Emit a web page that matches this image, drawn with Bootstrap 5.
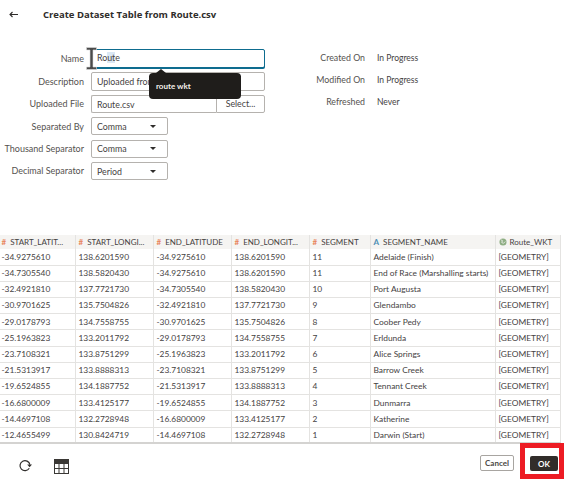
<!DOCTYPE html>
<html lang="en">
<head>
  <meta charset="UTF-8" />
  <meta name="viewport" content="width=device-width, initial-scale=1.0"/>
  <title>Create Dataset Table</title>
  <link href="https://cdn.jsdelivr.net/npm/bootstrap@5.3.3/dist/css/bootstrap.min.css" rel="stylesheet" />
  <style>
    html, body { height: 480px; overflow: hidden; }
    body { font-family: "Lato", "Liberation Sans", sans-serif; font-size: 8.5px; color: #45423f; background: #fff; }
    .page-head { height: 29px; padding-left: 9px; }
    .page-title { font-family: "Open Sans", sans-serif; font-size: 9.5px; font-weight: 700; margin: 0 0 0 25px; color: #2f2d2b; }
    .top-area { height: 206px; padding-top: 20px; }
    .form-side { width: 265px; position: relative; }
    .form-line { display: flex; align-items: center; height: 18px; margin-bottom: 4.4px; }
    .form-line.tall { height: 19px; margin-bottom: 4px; }
    .line-label { width: 84px; margin: 0; padding: 0; text-align: right; color: #55524f; flex: none; font-size: 9px; }
    .line-field { margin-left: 7px; flex: 1; }
    .form-control.ora-input { font-size: 8.8px; height: 100%; min-height: 0; padding: 0 5px; border-radius: 2px; border-color: #b5b2ae; color: #45423f; font-family: inherit; line-height: 1; }
    .tall .ora-input { height: 19px; }
    .ora-input.is-active { border-color: #0e6c8f; border-width: 1px; box-shadow: 0 1px 0 #0e6c8f; display: flex; align-items: center; }
    .sel-part { background: #dbe8f4; }
    .btn.ora-select-btn { width: 77px; height: 18px; font-size: 8.8px; padding: 0 5px; border: 1px solid #b5b2ae; border-radius: 2px; color: #45423f; display: flex; align-items: center; justify-content: space-between; background: #fff; }
    .ora-select-btn::after { border-top-width: 3px; border-left-width: 3px; border-right-width: 3px; margin-right: 6px; color: #2f2d2b; }
    .btn.ora-file-btn { width: 49px; height: 18px; padding: 0; font-size: 8.8px; border: 1px solid #b5b2ae; border-radius: 0 2px 2px 0; color: #45423f; background: #fff; }
    .file-box { height: 18px; }
    .file-box .ora-input { border-right: 0; border-radius: 2px 0 0 2px; }
    .tip-box { position: absolute; left: 149px; top: 24px; width: 92px; height: 26px; background: #1f1d1b; border-radius: 4px; color: #f4f1ec; font-weight: 700; font-size: 8px; padding: 7px 0 0 7px; }
    .tip-box::before { content: ""; position: absolute; left: 7px; top: -4px; border-left: 5px solid transparent; border-right: 5px solid transparent; border-bottom: 4px solid #1f1d1b; }
    .beam { position: absolute; left: 85px; top: -3px; }
    .info-side { margin-top: -2px; }
    .info-line { display: flex; height: 22px; align-items: center; }
    .info-label { width: 100px; text-align: right; color: #55524f; font-size: 8.8px; }
    .info-val { margin-left: 12px; }
    .grid-wrap { width: 560px; height: 208px; }
    .table.data-grid { table-layout: fixed; width: 560px; margin: 0; font-size: 8.4px; color: #45423f; --bs-table-bg: transparent; border-color: #e4e3e1; }
    .data-grid thead { vertical-align: middle; }
    .data-grid th { height: 14px; background: #f5f4f2; font-size: 8px; font-weight: 400; padding: 0 0 0 3px; border-bottom: 0; border-right: 1px solid #e4e3e1; white-space: nowrap; overflow: hidden; line-height: 1; color: #45423f; vertical-align: middle; }
    .data-grid td { height: 16.2px; padding: 0 0 0 3px; border-bottom: 1px solid #e4e3e1; border-right: 1px solid #e4e3e1; white-space: nowrap; line-height: 1; vertical-align: middle; }
    .data-grid th:first-child, .data-grid td:first-child { padding-left: 1.5px; }
    .data-grid tbody tr:last-child td { border-bottom-color: #d4d3d1; border-bottom-width: 2px; }
    .hash { color: #e8845c; margin-right: 4px; font-weight: 700; }
    .alpha { color: #4f8fb5; margin-right: 4px; font-weight: 700; }
    .geo-mark { vertical-align: -1px; margin-right: 3px; }
    .foot-bar { height: 36px; }
    .foot-icons { padding-left: 19px; padding-top: 16px; gap: 22px; }
    .btn.ora-cancel { width: 34px; height: 16px; padding: 0; font-size: 8px; font-weight: 700; color: #4a4744; background: #fff; border: 1px solid #a8a5a1; border-radius: 2px; line-height: 1; margin-right: 6px; margin-bottom: 8px; }
    .ok-frame { width: 44px; height: 36px; border: 5px solid #ed1c24; padding: 8px 0 0 5px; }
    .btn.ora-ok { width: 28px; height: 15px; padding: 0; font-size: 8px; font-weight: 700; color: #fff; background: #312d2a; border: 0; border-radius: 2px; line-height: 1; display: block; }
  </style>
</head>
<body>

  <!-- title bar -->
  <div class="page-head d-flex align-items-center">
    <svg width="9" height="7" viewBox="0 0 9 7"><path d="M9 3.5H1.5M3.5 1L1 3.5 3.5 6" fill="none" stroke="#2f2d2b" stroke-width="1.1"/></svg>
    <h1 class="page-title">Create Dataset Table from Route.csv</h1>
  </div>

  <!-- form and file info -->
  <div class="top-area d-flex">
    <div class="form-side">
      <div class="form-line tall">
        <label class="line-label">Name</label>
        <div class="line-field"><div class="form-control ora-input is-active"><span>Ro<span class="sel-part">ut</span>e</span></div></div>
      </div>
      <div class="form-line tall">
        <label class="line-label">Description</label>
        <div class="line-field"><input class="form-control ora-input" value="Uploaded from Route.csv"></div>
      </div>
      <div class="form-line">
        <label class="line-label">Uploaded File</label>
        <div class="line-field d-flex file-box">
          <input class="form-control ora-input" value="Route.csv">
          <button class="btn ora-file-btn flex-shrink-0">Select...</button>
        </div>
      </div>
      <div class="form-line">
        <label class="line-label">Separated By</label>
        <div class="line-field"><button class="btn ora-select-btn dropdown-toggle">Comma</button></div>
      </div>
      <div class="form-line">
        <label class="line-label">Thousand Separator</label>
        <div class="line-field"><button class="btn ora-select-btn dropdown-toggle">Comma</button></div>
      </div>
      <div class="form-line">
        <label class="line-label">Decimal Separator</label>
        <div class="line-field"><button class="btn ora-select-btn dropdown-toggle">Period</button></div>
      </div>

      <!-- text cursor and tooltip sit over the fields -->
      <svg class="beam" width="13" height="25" viewBox="0 0 13 25">
        <path d="M1.5 1.5h10v2.5H8v17h3.5v2.5h-10V21H5V4H1.500z" fill="#4a4a4a" stroke="#dcdcdc" stroke-width=".6"/>
      </svg>
      <div class="tip-box">route wkt</div>
    </div>

    <div class="info-side">
      <div class="info-line"><div class="info-label">Created On</div><div class="info-val">In Progress</div></div>
      <div class="info-line"><div class="info-label">Modified On</div><div class="info-val">In Progress</div></div>
      <div class="info-line"><div class="info-label">Refreshed</div><div class="info-val">Never</div></div>
    </div>
  </div>

  <!-- data preview -->
  <div class="grid-wrap">
    <table class="table data-grid">
      <colgroup>
        <col style="width:75px"><col style="width:78px"><col style="width:78px"><col style="width:78px"><col style="width:61px"><col style="width:125px"><col style="width:65px">
      </colgroup>
      <thead>
        <tr>
          <th><span class="hash">#</span>START_LATIT...</th>
          <th><span class="hash">#</span>START_LONGI...</th>
          <th><span class="hash">#</span>END_LATITUDE</th>
          <th><span class="hash">#</span>END_LONGIT...</th>
          <th><span class="hash">#</span>SEGMENT</th>
          <th><span class="alpha">A</span>SEGMENT_NAME</th>
          <th><svg class="geo-mark" width="8" height="8" viewBox="0 0 9 9"><circle cx="4.500" cy="4.500" r="4" fill="#8fae84"/><path d="M2 2l2 1-1 2 2 1 2-2" fill="none" stroke="#f5f4f2" stroke-width=".9"/></svg>Route_WKT</th>
        </tr>
      </thead>
      <tbody>
        <tr><td>-34.9275610</td><td>138.6201590</td><td>-34.9275610</td><td>138.6201590</td><td>11</td><td>Adelaide (Finish)</td><td>[GEOMETRY]</td></tr>
        <tr><td>-34.7305540</td><td>138.5820430</td><td>-34.9275610</td><td>138.6201590</td><td>11</td><td>End of Race (Marshalling starts)</td><td>[GEOMETRY]</td></tr>
        <tr><td>-32.4921810</td><td>137.7721730</td><td>-34.7305540</td><td>138.5820430</td><td>10</td><td>Port Augusta</td><td>[GEOMETRY]</td></tr>
        <tr><td>-30.9701625</td><td>135.7504826</td><td>-32.4921810</td><td>137.7721730</td><td>9</td><td>Glendambo</td><td>[GEOMETRY]</td></tr>
        <tr><td>-29.0178793</td><td>134.7558755</td><td>-30.9701625</td><td>135.7504826</td><td>8</td><td>Coober Pedy</td><td>[GEOMETRY]</td></tr>
        <tr><td>-25.1963823</td><td>133.2011792</td><td>-29.0178793</td><td>134.7558755</td><td>7</td><td>Erldunda</td><td>[GEOMETRY]</td></tr>
        <tr><td>-23.7108321</td><td>133.8751299</td><td>-25.1963823</td><td>133.2011792</td><td>6</td><td>Alice Springs</td><td>[GEOMETRY]</td></tr>
        <tr><td>-21.5313917</td><td>133.8888313</td><td>-23.7108321</td><td>133.8751299</td><td>5</td><td>Barrow Creek</td><td>[GEOMETRY]</td></tr>
        <tr><td>-19.6524855</td><td>134.1887752</td><td>-21.5313917</td><td>133.8888313</td><td>4</td><td>Tennant Creek</td><td>[GEOMETRY]</td></tr>
        <tr><td>-16.6800009</td><td>133.4125177</td><td>-19.6524855</td><td>134.1887752</td><td>3</td><td>Dunmarra</td><td>[GEOMETRY]</td></tr>
        <tr><td>-14.4697108</td><td>132.2728948</td><td>-16.6800009</td><td>133.4125177</td><td>2</td><td>Katherine</td><td>[GEOMETRY]</td></tr>
        <tr><td>-12.4655499</td><td>130.8424719</td><td>-14.4697108</td><td>132.2728948</td><td>1</td><td>Darwin (Start)</td><td>[GEOMETRY]</td></tr>
      </tbody>
    </table>
  </div>

  <!-- footer -->
  <div class="foot-bar d-flex justify-content-between">
    <div class="foot-icons d-flex align-items-start">
      <svg width="13" height="13" viewBox="0 0 13 13"><path d="M10.300 9.200A5 5 0 1 1 10.900 5.600" fill="none" stroke="#2f2d2b" stroke-width="1.200"/><path d="M8.200 5.400h4.800l-2.400 2.900z" fill="#2f2d2b"/></svg>
      <svg width="15" height="15" viewBox="0 0 15 15"><rect x=".5" y=".5" width="14" height="14" fill="#fff" stroke="#3a3835"/><rect x="0" y="0" width="15" height="5" fill="#3a3835"/><path d="M5 5v10M10 5v10M0 9.500h15" stroke="#3a3835" fill="none"/></svg>
    </div>
    <div class="d-flex align-items-end">
      <button class="btn ora-cancel">Cancel</button>
      <div class="ok-frame"><button class="btn ora-ok">OK</button></div>
    </div>
  </div>

  <script src="https://cdn.jsdelivr.net/npm/bootstrap@5.3.3/dist/js/bootstrap.bundle.min.js"></script>
</body>
</html>
